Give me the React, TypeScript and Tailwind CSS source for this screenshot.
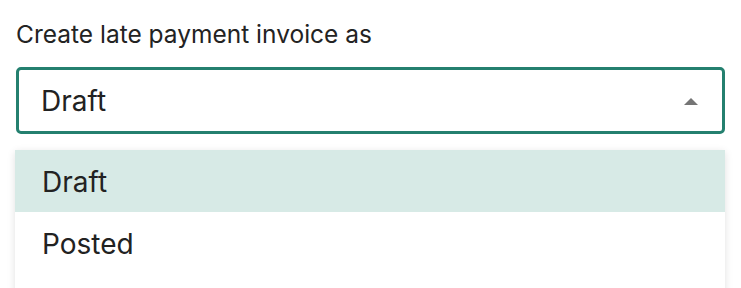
import React from 'react';

const options = ['Draft', 'Posted'];

const App: React.FC = () => {
  const selected = 'Draft';

  return (
    <div className="w-[741px] h-[288px] overflow-hidden bg-white font-['Inter','Liberation_Sans',sans-serif]">
      <div className="pl-4 pr-4 pt-[19px]">
        <label className="block text-[24.5px] leading-[30px] text-[#232323]">Create late payment invoice as</label>
        <div className="relative mt-[18px] w-[709px]">
          <button
            type="button"
            className="flex h-[67px] w-full items-center justify-between rounded-[5px] border-[3px] border-[#24806f] bg-white pl-[22px] pr-[22px] text-left"
          >
            <span className="text-[28px] text-[#222]">{selected}</span>
            <svg width="16" height="8" viewBox="0 0 16 8" className="mr-[1px]">
              <path d="M1 8 L8 1 L15 8 Z" fill="#757575" />
            </svg>
          </button>
          <ul className="absolute left-[-1px] top-full mt-4 w-[710px] bg-white shadow-[0_2px_8px_rgba(0,0,0,0.12)]">
            {options.map((opt) => (
              <li
                key={opt}
                className={`flex h-[62px] items-center pl-[27px] pt-[2px] text-[28px] text-[#222] ${
                  opt === selected ? 'bg-[#d7eae6]' : 'bg-white'
                }`}
              >
                {opt}
              </li>
            ))}
            <li className="h-[20px]" />
          </ul>
        </div>
      </div>
    </div>
  );
};

export default App;
